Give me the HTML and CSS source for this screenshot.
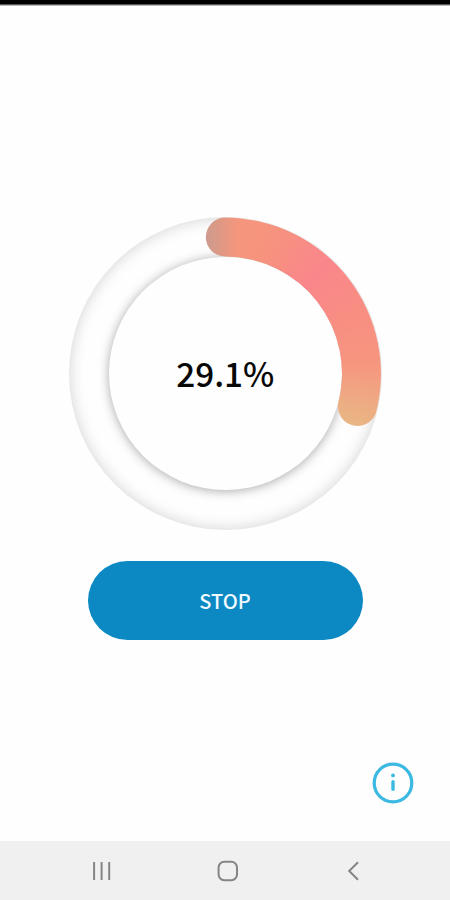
FILE: index.html
```
<!DOCTYPE html>
<html lang="en">
<head>
<meta charset="utf-8">
<title>Progress</title>
<link rel="stylesheet" href="styles.css">
</head>
<body>
<div class="status"></div>
<main>
  <div class="ring">
    <div class="hole">29.1%</div>
    <div class="arc"></div>
  </div>
  <button class="stop">STOP</button>
  <svg class="info" width="42" height="42" viewBox="0 0 42 42" fill="none" stroke="#3cb9e3" stroke-linecap="round">
    <circle cx="21" cy="21" r="18.8" stroke-width="3.2"/>
    <path d="M21 19.7v7.6" stroke-width="3.4"/>
    <circle cx="21" cy="13.4" r="1.9" fill="#3cb9e3" stroke="none"/>
  </svg>
</main>
<nav class="nav">
  <svg width="20" height="20" viewBox="0 0 20 20" stroke="#858585" stroke-width="2"><path d="M2.1 1v18M9.6 1v18M17.2 1v18"/></svg>
  <svg width="22" height="22" viewBox="0 0 22 22" fill="none" stroke="#858585" stroke-width="2"><rect x="1.6" y="1.8" width="18.4" height="18.4" rx="5.6"/></svg>
  <svg width="14" height="20" viewBox="0 0 14 20" fill="none" stroke="#858585" stroke-width="2"><path d="M12 1.3L3.2 10l8.8 8.7"/></svg>
</nav>
</body>
</html>
```
FILE: styles.css
```
* { box-sizing: border-box; }
body {
  margin: 0;
  height: 900px;
  display: flex;
  flex-direction: column;
  background: #fefefe;
  font-family: "Noto Sans CJK SC", "Noto Sans", sans-serif;
  overflow: hidden;
}
.status {
  height: 6px;
  background: linear-gradient(#000 4px, #555 4px, #555 5px, #bbb 5px);
}
main {
  flex: 1;
  display: flex;
  flex-direction: column;
  align-items: center;
  padding-top: 211px;
}
.ring {
  position: relative;
  width: 313px;
  height: 313px;
  padding: 39.5px 39px 39px 40px;
  border-radius: 50%;
  box-shadow: inset 0 0 15px rgba(0, 0, 0, .18);
}
.hole {
  width: 233.5px;
  height: 233.5px;
  border-radius: 50%;
  background: #fefefe;
  box-shadow: 0 1px 11px rgba(0, 0, 0, .34);
  display: flex;
  align-items: center;
  justify-content: center;
  font-size: 33.3px;
  font-weight: 500;
  line-height: 50px;
  color: #080808;
}
.arc {
  position: absolute;
  inset: 0;
  background: conic-gradient(from -10deg, #c99b90 0deg, #dc9986 7deg, #f5967d 15deg, #f6937e 28deg, #fa868b 52deg, #f88e82 76deg, #f6967f 96deg, #eeab83 112deg, #e9b684 122deg, #e9b684 360deg);
  clip-path: path("M156.8 .6 A156.2 156.2 0 0 1 307.4 196.2 A19.6 19.6 0 0 1 269.7 186.1 A117 117 0 0 0 156.8 39.6 A19.5 19.5 0 0 1 156.8 .6 Z");
}
.stop {
  width: 275px;
  height: 79px;
  margin-top: 31px;
  padding: 1px 0 0;
  border: 0;
  border-radius: 40px;
  background: #0c89c3;
  color: #eff9ff;
  font: 500 20px/30px "Noto Sans CJK SC", "Noto Sans", sans-serif;
}
.info {
  align-self: flex-end;
  margin: 122px 36px 0 0;
}
.nav {
  height: 59px;
  flex: none;
  display: flex;
  align-items: center;
  justify-content: space-between;
  padding: 0 90px 0 92px;
  background: #f0f0f0;
}
.nav svg:nth-child(2) { margin-right: 2px; }
```
